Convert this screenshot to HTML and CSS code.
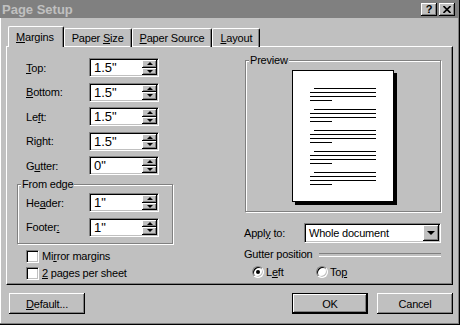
FILE: index.html
```html
<!DOCTYPE html>
<html lang="en">
<head>
    <meta charset="UTF-8">
    <title>Page Setup</title>
    <link rel="stylesheet" href="styles.css">
</head>
<body>
<div class="dialog">
    <div class="titlebar">
        <span class="title">Page Setup</span>
        <div class="caption-buttons">
            <span class="cap-btn">?</span>
            <span class="cap-btn">
                <svg width="8" height="7" viewBox="0 0 8 7"><path d="M0.5 0 L7.5 7 M7.5 0 L0.5 7" stroke="#000" stroke-width="1.6" fill="none"/></svg>
            </span>
        </div>
    </div>

    <div class="tabs">
        <div class="tab active"><span><u>M</u>argins</span></div>
        <div class="tab"><span>Paper <u>S</u>ize</span></div>
        <div class="tab"><span><u>P</u>aper Source</span></div>
        <div class="tab"><span><u>L</u>ayout</span></div>
    </div>

    <div class="panel">
        <div class="col-left">
            <div class="fields">
                <div class="field"><label><u>T</u>op:</label><div class="spin"><span class="spin-value">1.5"</span><div class="spin-arrows"><span class="arrow-btn"><i class="tri up"></i></span><span class="arrow-btn"><i class="tri down"></i></span></div></div></div>
                <div class="field"><label><u>B</u>ottom:</label><div class="spin"><span class="spin-value">1.5"</span><div class="spin-arrows"><span class="arrow-btn"><i class="tri up"></i></span><span class="arrow-btn"><i class="tri down"></i></span></div></div></div>
                <div class="field"><label>Le<u>f</u>t:</label><div class="spin"><span class="spin-value">1.5"</span><div class="spin-arrows"><span class="arrow-btn"><i class="tri up"></i></span><span class="arrow-btn"><i class="tri down"></i></span></div></div></div>
                <div class="field"><label>Ri<u>g</u>ht:</label><div class="spin"><span class="spin-value">1.5"</span><div class="spin-arrows"><span class="arrow-btn"><i class="tri up"></i></span><span class="arrow-btn"><i class="tri down"></i></span></div></div></div>
                <div class="field"><label>G<u>u</u>tter:</label><div class="spin"><span class="spin-value">0"</span><div class="spin-arrows"><span class="arrow-btn"><i class="tri up"></i></span><span class="arrow-btn"><i class="tri down"></i></span></div></div></div>
            </div>

            <fieldset class="group edge">
                <legend>From edge</legend>
                <div class="fields">
                    <div class="field"><label>He<u>a</u>der:</label><div class="spin"><span class="spin-value">1"</span><div class="spin-arrows"><span class="arrow-btn"><i class="tri up"></i></span><span class="arrow-btn"><i class="tri down"></i></span></div></div></div>
                    <div class="field"><label>Footer<u>:</u></label><div class="spin"><span class="spin-value">1"</span><div class="spin-arrows"><span class="arrow-btn"><i class="tri up"></i></span><span class="arrow-btn"><i class="tri down"></i></span></div></div></div>
                </div>
            </fieldset>

            <div class="checks">
                <div class="check"><span class="checkbox"></span><span>Mi<u>r</u>ror margins</span></div>
                <div class="check"><span class="checkbox"></span><span><u>2</u> pages per sheet</span></div>
            </div>
        </div>

        <div class="col-right">
            <fieldset class="group preview">
                <legend>Preview</legend>
                <div class="page">
                    <div class="para"><span class="ln indent"></span><span class="ln"></span><span class="ln"></span><span class="ln short"></span></div>
                    <div class="para"><span class="ln indent"></span><span class="ln"></span><span class="ln"></span><span class="ln short"></span></div>
                    <div class="para"><span class="ln indent"></span><span class="ln"></span><span class="ln"></span><span class="ln short"></span></div>
                    <div class="para"><span class="ln indent"></span><span class="ln"></span><span class="ln"></span><span class="ln short"></span></div>
                    <div class="para"><span class="ln indent"></span><span class="ln"></span><span class="ln"></span><span class="ln short"></span></div>
                </div>
            </fieldset>

            <div class="apply">
                <label>Appl<u>y</u> to:</label>
                <div class="select">
                    <span class="select-value">Whole document</span>
                    <span class="drop-btn"><i class="tri down"></i></span>
                </div>
            </div>

            <div class="gutter-title">Gutter position</div>
            <div class="radios">
                <div class="radio-item"><span class="radio on"></span><span>L<u>e</u>ft</span></div>
                <div class="radio-item"><span class="radio"></span><span>To<u>p</u></span></div>
            </div>
        </div>
    </div>

    <div class="buttons">
        <div class="btn"><span><u>D</u>efault...</span></div>
        <div class="btn default ok">OK</div>
        <div class="btn">Cancel</div>
    </div>
</div>
</body>
</html>
```

FILE: styles.css
```css
* {
    box-sizing: border-box;
}
body {
    margin: 0;
    font-family: "Liberation Sans", Arial, sans-serif;
    font-size: 11px;
    letter-spacing: -0.2px;
    color: #000;
    background: #c0c0c0;
}
u {
    text-decoration: underline;
    text-underline-offset: 1px;
}
.dialog {
    width: 460px;
    height: 325px;
    background: #c0c0c0;
    border-right: 1px solid #000;
    border-bottom: 1px solid #000;
    box-shadow: inset -1px -1px #808080, inset 1px 0 #fff;
}

/* title bar */
.titlebar {
    height: 18px;
    background: #808080;
    display: flex;
    align-items: center;
    justify-content: space-between;
    padding: 0 4px 0 2px;
}
.title {
    color: #c0c0c0;
    font-weight: bold;
    font-size: 13px;
    letter-spacing: 0;
}
.caption-buttons {
    display: flex;
    gap: 2px;
}
.cap-btn {
    width: 16px;
    height: 13px;
    background: #c0c0c0;
    box-shadow: inset -1px -1px #000, inset 1px 1px #fff, inset -2px -2px #808080;
    display: flex;
    align-items: center;
    justify-content: center;
    font-weight: bold;
    font-size: 11px;
    line-height: 1;
}

/* tabs */
.tabs {
    display: flex;
    align-items: flex-end;
    padding-left: 8px;
    margin-top: 8px;
    height: 21px;
    margin-bottom: -1px;
}
.tab {
    height: 19px;
    padding: 0 7px;
    display: flex;
    align-items: center;
    border-top: 1px solid #fff;
    border-left: 1px solid #fff;
    border-right: 1px solid #000;
    border-radius: 2px 2px 0 0;
    box-shadow: inset -1px 0 #808080;
}
.tab.active {
    height: 21px;
    padding: 0 9px 0 7px;
    position: relative;
    z-index: 1;
    background: #c0c0c0;
}

/* panel */
.panel {
    margin: 0 6px;
    height: 239px;
    display: flex;
    gap: 71px;
    padding: 6px 11px 0 10px;
    border-top: 1px solid #fff;
    border-left: 1px solid #fff;
    border-right: 1px solid #000;
    border-bottom: 1px solid #000;
    box-shadow: inset -1px -1px #808080;
}
.col-left {
    width: 156px;
    padding-top: 5px;
    display: flex;
    flex-direction: column;
}
.col-right {
    width: 197px;
    display: flex;
    flex-direction: column;
}
.fields {
    display: flex;
    flex-direction: column;
    gap: 5.5px;
    padding-left: 9px;
}
.field {
    display: flex;
    align-items: center;
    height: 19px;
}
.field label {
    width: 63px;
}

/* sunken edit boxes */
.spin, .select {
    height: 19px;
    background: #fff;
    display: flex;
    align-items: stretch;
    padding: 1px;
    border-top: 1px solid #808080;
    border-left: 1px solid #808080;
    border-right: 1px solid #fff;
    border-bottom: 1px solid #fff;
    box-shadow: inset 1px 1px #000, inset -1px -1px #c0c0c0;
}
.spin {
    width: 70px;
}
.spin-value, .select-value {
    flex: 1;
    display: flex;
    align-items: center;
    padding-left: 3px;
    font-size: 13px;
    letter-spacing: 0;
}
.select-value {
    font-size: 11px;
    letter-spacing: -0.2px;
}
.spin-arrows {
    width: 15px;
    display: flex;
    flex-direction: column;
}
.arrow-btn, .drop-btn {
    flex: 1;
    background: #c0c0c0;
    box-shadow: inset -1px -1px #000, inset 1px 1px #fff, inset -2px -2px #808080;
    display: flex;
    align-items: center;
    justify-content: center;
}
.drop-btn {
    flex: none;
    width: 16px;
}
.tri {
    width: 0;
    height: 0;
    border-left: 3px solid transparent;
    border-right: 3px solid transparent;
}
.tri.up {
    border-bottom: 3px solid #000;
}
.tri.down {
    border-top: 3px solid #000;
}
.drop-btn .tri {
    border-left-width: 4px;
    border-right-width: 4px;
    border-top-width: 4px;
}

/* group boxes */
.group {
    margin: 0;
    padding: 0;
    min-width: 0;
    border: 1px solid #808080;
    box-shadow: inset 1px 1px #fff, 1px 1px #fff;
}
.group legend {
    margin-left: 3px;
    padding: 0 1px;
    line-height: 14px;
    background: #c0c0c0;
}
.edge {
    margin-top: 2px;
}
.edge .fields {
    padding: 2px 0 6px 8px;
}

/* checkboxes */
.checks {
    margin-top: 6px;
    padding-left: 9px;
    display: flex;
    flex-direction: column;
    gap: 4px;
}
.check {
    display: flex;
    align-items: center;
    gap: 3px;
    height: 13px;
}
.checkbox {
    width: 13px;
    height: 13px;
    background: #fff;
    border-top: 1px solid #808080;
    border-left: 1px solid #808080;
    border-right: 1px solid #fff;
    border-bottom: 1px solid #fff;
    box-shadow: inset 1px 1px #000, inset -1px -1px #c0c0c0;
}

/* preview */
.preview {
    margin-left: 1px;
    padding: 3px 0 9px;
    display: flex;
    justify-content: center;
}
.page {
    width: 102px;
    height: 132px;
    margin: 0 auto;
    background: #fff;
    border: 1px solid #000;
    box-shadow: 3px 3px 0 #000;
    padding: 17px 0 0 17px;
    display: flex;
    flex-direction: column;
    gap: 8px;
}
.para {
    display: flex;
    flex-direction: column;
    gap: 3px;
}
.ln {
    display: block;
    width: 66px;
    height: 1px;
    background: #000;
}
.ln.indent {
    width: 62px;
    margin-left: 4px;
}
.ln.short {
    width: 22px;
}

/* apply to */
.apply {
    margin-top: 11px;
    display: flex;
    align-items: center;
}
.apply label {
    width: 60px;
}
.select {
    width: 137px;
    height: 20px;
}
.gutter-title {
    margin-top: 5px;
    display: flex;
    align-items: center;
    gap: 6px;
    line-height: 13px;
}
.gutter-title::after {
    content: "";
    flex: 1;
    height: 2px;
    border-top: 1px solid #808080;
    border-bottom: 1px solid #fff;
}
.radios {
    margin-top: 4px;
    padding-left: 8px;
    display: flex;
}
.radio-item {
    width: 64px;
    display: flex;
    align-items: center;
    gap: 2px;
    height: 13px;
}
.radio {
    width: 12px;
    height: 12px;
    border-radius: 50%;
    background: #fff;
    border: 1px solid;
    border-color: #808080 #fff #fff #808080;
    box-shadow: inset 1px 1px #000, inset -1px -1px #c0c0c0;
    display: flex;
    align-items: center;
    justify-content: center;
}
.radio.on::after {
    content: "";
    width: 4px;
    height: 4px;
    border-radius: 50%;
    background: #000;
}

/* bottom buttons */
.buttons {
    margin-top: 8px;
    padding: 0 6px 0 9px;
    display: flex;
    gap: 9px;
}
.btn {
    width: 76px;
    height: 21px;
    display: flex;
    align-items: center;
    justify-content: center;
    background: #c0c0c0;
    box-shadow: inset -1px -1px #000, inset 1px 1px #fff, inset -2px -2px #808080;
}
.btn.ok {
    margin-left: auto;
}
.btn.default {
    border: 1px solid #000;
    box-shadow: inset -1px -1px #000, inset 1px 1px #fff, inset -2px -2px #808080;
}
```
